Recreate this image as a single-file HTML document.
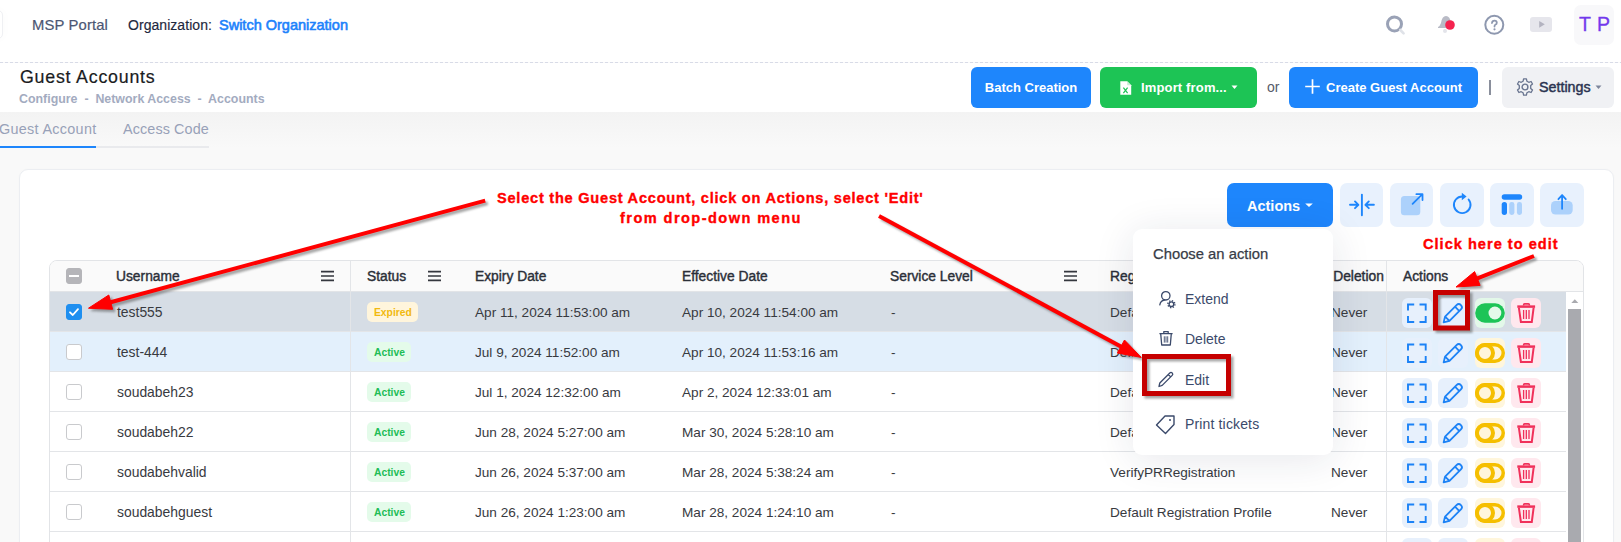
<!DOCTYPE html>
<html><head><meta charset="utf-8">
<style>
*{box-sizing:border-box;margin:0;padding:0}
html,body{width:1621px;height:542px;overflow:hidden;background:#f9f9f9;font-family:"Liberation Sans",sans-serif;position:relative}
.a{position:absolute;white-space:nowrap}
#top{position:absolute;left:0;top:0;width:1621px;height:62px;background:#fff}
#dash{position:absolute;left:0;top:62px;width:1621px;height:1px;background-image:linear-gradient(to right,#d8dbe7 60%,transparent 60%);background-size:5px 1px}
#ph{position:absolute;left:0;top:63px;width:1621px;height:49px;background:#fff}
.btn{position:absolute;top:67px;height:41px;border-radius:6px;color:#fff;font-weight:700;font-size:13px;line-height:41px}
#card{position:absolute;left:19px;top:169px;width:1595px;height:400px;background:#fff;border:1px solid #eceef2;border-radius:9px;box-shadow:0 0 3px rgba(0,0,0,.02)}
#tbl{position:absolute;left:49px;top:260px;width:1535px;height:300px;border:1px solid #e2e4e7;border-radius:8px;background:#fff;overflow:hidden}
.th{position:absolute;top:269px;font-size:13.8px;font-weight:400;color:#2b2f38;line-height:16px;-webkit-text-stroke:0.4px #2b2f38}
.row{position:absolute;left:50px;width:1516px;height:40px;border-bottom:1px solid #e3e5e8}
.td{position:absolute;font-size:13.6px;color:#383a3f;line-height:16px}
.cb{position:absolute;left:66px;width:16px;height:16px;border:1px solid #c9cacd;border-radius:3px;background:#fff}
.badge{position:absolute;left:367px;height:20px;border-radius:5px;font-size:10.3px;font-weight:700;line-height:20px;padding-left:7px}
.ib{position:absolute;width:30px;height:30px;border-radius:6px}
.tb{position:absolute;top:183px;width:43px;height:44px;border-radius:7px;background:#e8f1fd}
.hm{position:absolute;width:13px;height:10px;border-top:2px solid #3a3d44;border-bottom:2px solid #3a3d44}
.hm:after{content:"";position:absolute;left:0;top:2px;width:13px;height:2px;background:#3a3d44}
.dd{position:absolute;font-size:14px;color:#3b4a6b;line-height:16px}
.ann{position:absolute;color:#ff0000;font-weight:700;font-size:14px;white-space:nowrap;-webkit-text-stroke:0.35px #ff0000}
</style></head><body>
<div id="top"></div>
<div class="a" style="left:-8px;top:10px;width:11px;height:29px;border:1px solid #eff0f3;border-radius:5px;background:#fff;box-shadow:0 0 12px rgba(0,0,0,.025)"></div>
<div class="a" style="left:32px;top:17px;font-size:14.8px;color:#4b5673;line-height:17px;letter-spacing:0.15px;-webkit-text-stroke:0.2px #4b5673">MSP Portal</div>
<div class="a" style="left:128px;top:17px;font-size:14px;color:#1e2840;line-height:17px;letter-spacing:0.05px;-webkit-text-stroke:0.15px #1e2840">Organization:</div>
<div class="a" style="left:219px;top:17px;font-size:14.5px;font-weight:400;color:#1d82fb;line-height:17px;-webkit-text-stroke:0.6px #1d82fb">Switch Organization</div>
<!-- header icons -->
<svg class="a" style="left:1380px;top:10px" width="30" height="30" viewBox="0 0 30 30">
<circle cx="14.5" cy="14" r="7" fill="none" stroke="#9aa2b6" stroke-width="3"/>
<line x1="20.3" y1="20" x2="23.6" y2="23.3" stroke="#dfe2e8" stroke-width="2.6" stroke-linecap="round"/>
</svg>
<svg class="a" style="left:1432px;top:10px" width="30" height="30" viewBox="0 0 30 30">
<path d="M6 18 L6 17 Q8 16 9 13 Q10 6 14 6 Q18 6 19 13 L19 18 Z" fill="#b9bbc6"/>
<circle cx="13" cy="21" r="2" fill="#e3e4ea"/>
<circle cx="18" cy="15" r="4.8" fill="#f5234f"/>
</svg>
<svg class="a" style="left:1482px;top:12px" width="26" height="26" viewBox="0 0 26 26">
<circle cx="12.3" cy="12.8" r="9" fill="none" stroke="#8e98af" stroke-width="2"/>
<path d="M10 11 Q10.2 8.6 12.5 8.6 Q14.8 8.6 14.8 10.7 Q14.8 12 13.3 12.7 Q12.5 13.1 12.5 14.6" fill="none" stroke="#8e98af" stroke-width="1.8" stroke-linecap="round"/>
<circle cx="12.5" cy="17.3" r="1.1" fill="#8e98af"/>
</svg>
<div class="a" style="left:1530px;top:17px;width:22px;height:15px;border-radius:3px;background:#e6e6ec"></div>
<svg class="a" style="left:1538px;top:20px" width="9" height="9" viewBox="0 0 9 9"><path d="M1.2 0.9 L6.8 4.3 L1.2 7.7 Z" fill="#b3b3c0"/></svg>
<div class="a" style="left:1574px;top:5px;width:40px;height:40px;border-radius:7px;background:#f8f8fa"></div>
<div class="a" style="left:1579px;top:14px;font-size:19.5px;color:#7339ec;line-height:20px;letter-spacing:0.5px;-webkit-text-stroke:0.3px #7339ec">T P</div>
<div id="dash"></div>
<div id="ph"></div>
<div class="a" style="left:20px;top:67px;font-size:17.8px;color:#1a1c22;line-height:20px;letter-spacing:0.78px;-webkit-text-stroke:0.2px #1a1c22">Guest Accounts</div>
<div class="a" style="left:19px;top:92px;font-size:12.4px;font-weight:700;color:#a3abbf;line-height:14px">Configure &nbsp;-&nbsp; Network Access &nbsp;-&nbsp; Accounts</div>
<div class="btn" style="left:971px;width:120px;background:#1e86fc;text-align:center">Batch Creation</div>
<div class="btn" style="left:1100px;width:157px;background:#1dc455;padding-left:41px;letter-spacing:0.15px">Import from...</div>
<div class="btn" style="left:1289px;width:189px;background:#1e86fc;padding-left:37px">Create Guest Account</div>
<div class="a" style="left:1489px;top:80px;width:1.5px;height:15px;background:#8a8f9c"></div>
<div class="btn" style="left:1502px;width:112px;background:#f0f1f4;color:#2a3350;padding-left:37px;font-weight:400;font-size:14.3px;-webkit-text-stroke:0.45px #2a3350">Settings</div>
<div class="a" style="left:1267px;top:79px;font-size:14px;color:#555b68;line-height:16px">or</div>
<!-- button icons -->
<svg class="a" style="left:1120px;top:81px" width="12" height="14" viewBox="0 0 12 14">
<path d="M0.3 0.3 H7.2 L11.2 4.3 V13.8 H0.3 Z" fill="#fff"/>
<path d="M7.2 0.3 V4.3 H11.2 Z" fill="#c6efd3"/>
<path d="M3.4 6.6 L7.6 12.2 M7.6 6.6 L3.4 12.2" stroke="#1dc455" stroke-width="1.2"/>
</svg>
<svg class="a" style="left:1231px;top:85px" width="7" height="5" viewBox="0 0 7 5"><path d="M0.5 0.5 H6.5 L3.5 4 Z" fill="#fff"/></svg>
<svg class="a" style="left:1304px;top:78px" width="17" height="17" viewBox="0 0 17 17"><path d="M8.5 1.2 V15.8 M1.2 8.5 H15.8" stroke="#fff" stroke-width="1.7"/></svg>
<svg class="a" style="left:1515px;top:77px" width="20" height="20" viewBox="0 0 20 20">
<path d="M8.6 1.8 H11.4 L11.9 4.2 L13.8 5.3 L16.1 4.5 L17.5 7 L15.7 8.6 V11.4 L17.5 13 L16.1 15.5 L13.8 14.7 L11.9 15.8 L11.4 18.2 H8.6 L8.1 15.8 L6.2 14.7 L3.9 15.5 L2.5 13 L4.3 11.4 V8.6 L2.5 7 L3.9 4.5 L6.2 5.3 L8.1 4.2 Z" fill="none" stroke="#68748f" stroke-width="1.3" stroke-linejoin="round"/>
<circle cx="10" cy="10" r="2.9" fill="none" stroke="#68748f" stroke-width="1.4"/>
</svg>
<svg class="a" style="left:1595px;top:85px" width="7" height="5" viewBox="0 0 7 5"><path d="M0.5 0.5 H6.5 L3.5 4 Z" fill="#7d859b"/></svg>
<div class="a" style="left:0;top:112px;width:1621px;height:36px;background:linear-gradient(#f3f3f3,#f9f9f9)"></div>
<!-- tabs -->
<div class="a" style="left:-1px;top:121px;font-size:14.4px;color:#98a1b8;line-height:17px;letter-spacing:0.3px">Guest Account</div>
<div class="a" style="left:123px;top:121px;font-size:14.4px;color:#98a1b8;line-height:17px;letter-spacing:0.1px">Access Code</div>
<div class="a" style="left:0;top:146px;width:209px;height:2px;background:#e9eaed"></div>
<div class="a" style="left:0;top:146px;width:96px;height:2px;background:#1e86fc"></div>
<!-- card -->
<div id="card"></div>
<div id="tbl"></div>
<div class="a" style="left:50px;top:261px;width:1533px;height:31px;background:#fafafa;border-radius:7px 7px 0 0;border-bottom:1px solid #e2e4e7"></div>

<div class="a cb" style="top:268px;background:#b5b5b9;border-color:#b5b5b9"></div>
<div class="a" style="left:69px;top:275px;width:10px;height:2px;background:#fff"></div>
<div class="th a" style="left:116px">Username</div>
<div class="th a" style="left:367px">Status</div>
<div class="th a" style="left:475px">Expiry Date</div>
<div class="th a" style="left:682px">Effective Date</div>
<div class="th a" style="left:890px">Service Level</div>
<div class="th a" style="left:1110px">Registration Profile</div>
<div class="th a" style="left:1301px">Auto Deletion</div>
<div class="th a" style="left:1403px">Actions</div>
<svg class="a" style="left:321px;top:270px" width="13" height="12" viewBox="0 0 13 12"><path d="M0 1.6 H13 M0 6 H13 M0 10.4 H13" stroke="#34373e" stroke-width="1.6"/></svg>
<svg class="a" style="left:428px;top:270px" width="13" height="12" viewBox="0 0 13 12"><path d="M0 1.6 H13 M0 6 H13 M0 10.4 H13" stroke="#34373e" stroke-width="1.6"/></svg>
<svg class="a" style="left:1064px;top:270px" width="13" height="12" viewBox="0 0 13 12"><path d="M0 1.6 H13 M0 6 H13 M0 10.4 H13" stroke="#34373e" stroke-width="1.6"/></svg>
<div class="a" style="left:350px;top:261px;width:1px;height:281px;background:#e3e5e8"></div>
<div class="a" style="left:1386px;top:261px;width:1px;height:281px;background:#e3e5e8"></div>
<div class="row" style="top:292px;background:#d6dde5"></div>
<div class="row" style="top:332px;background:#e3f0fc"></div>
<div class="row" style="top:372px;background:#fff"></div>
<div class="row" style="top:412px;background:#fff"></div>
<div class="row" style="top:452px;background:#fff"></div>
<div class="row" style="top:492px;background:#fff"></div>
<div class="row" style="top:532px;background:#fff"></div>
<div class="a" style="left:350px;top:291px;width:1px;height:251px;background:#e3e5e8"></div>
<div class="a" style="left:1386px;top:291px;width:1px;height:251px;background:#e3e5e8"></div>
<div class="cb" style="top:304px;background:#1f8ff0;border-color:#1f8ff0"></div>
<svg class="a" style="left:66px;top:304px" width="16" height="16" viewBox="0 0 16 16"><path d="M4 8.3 L6.8 11 L12 5.2" fill="none" stroke="#fff" stroke-width="1.8" stroke-linecap="round" stroke-linejoin="round"/></svg>
<div class="td a" style="left:117px;top:304px;font-size:13.9px;line-height:17px">test555</div>
<div class="badge a" style="top:302px;width:51px;background:#fff5dc;color:#f1b90f;padding-top:1px">Expired</div>
<div class="td a" style="left:475px;top:305px">Apr 11, 2024 11:53:00 am</div>
<div class="td a" style="left:682px;top:305px">Apr 10, 2024 11:54:00 am</div>
<div class="td a" style="left:891px;top:305px">-</div>
<div class="td a" style="left:1110px;top:305px">Default Registration Profile</div>
<div class="td a" style="left:1331px;top:305px">Never</div>
<div class="ib a" style="left:1402px;top:298px;background:#e7f0fc"></div>
<svg class="a" style="left:1402px;top:298px" width="30" height="30" viewBox="0 0 30 30"><path d="M6 12.6 V6.5 H12.2 M17.5 6.5 H23.7 V12.6 M23.7 17.9 V24 H17.5 M12.2 24 H6 V17.9" fill="none" stroke="#1c82f6" stroke-width="1.9"/></svg>
<div class="ib a" style="left:1438px;top:298px;background:#e7f0fc"></div>
<svg class="a" style="left:1438px;top:298px" width="30" height="30" viewBox="0 0 30 30"><g transform="translate(5.6 24.4) rotate(-45)"><path d="M0 0 L5.2 -3.1 H21.4 A3.1 3.1 0 0 1 21.4 3.1 H5.2 Z M5.2 -3.1 V3.1 M19.2 -3.1 V3.1" fill="none" stroke="#1c82f6" stroke-width="1.8" stroke-linejoin="round"/></g></svg>
<div class="ib a" style="left:1475px;top:298px;background:#e3f8e9"></div>
<svg class="a" style="left:1475px;top:298px" width="30" height="30" viewBox="0 0 30 30"><rect x="0.2" y="5.3" width="29.6" height="19.4" rx="9.7" fill="#1dc457"/><circle cx="19.9" cy="15" r="6.4" fill="#e4f9ea"/></svg>
<div class="ib a" style="left:1511px;top:298px;background:#ffe8ee"></div>
<svg class="a" style="left:1511px;top:298px" width="30" height="30" viewBox="0 0 30 30"><g fill="none" stroke="#f0305a"><path d="M6.3 8.6 H24.1" stroke-width="2.5"/><path d="M12.6 7.6 V6.9 Q12.6 5.9 13.6 5.9 H17.4 Q18.4 5.9 18.4 6.9 V7.6" stroke-width="1.6"/><path d="M7.9 9.9 L9.9 24 H20.8 L22.6 9.9" stroke-width="2"/><path d="M12.6 12.1 V20.9 M15.3 12.1 V20.9 M18 12.1 V20.9" stroke-width="1.3"/></g></svg>
<div class="cb" style="top:344px"></div>
<div class="td a" style="left:117px;top:344px;font-size:13.9px;line-height:17px">test-444</div>
<div class="badge a" style="top:342px;width:44px;background:#e4fbea;color:#1dbd57;padding-top:1px">Active</div>
<div class="td a" style="left:475px;top:345px">Jul 9, 2024 11:52:00 am</div>
<div class="td a" style="left:682px;top:345px">Apr 10, 2024 11:53:16 am</div>
<div class="td a" style="left:891px;top:345px">-</div>
<div class="td a" style="left:1110px;top:345px">Default Registration Profile</div>
<div class="td a" style="left:1331px;top:345px">Never</div>
<div class="ib a" style="left:1402px;top:338px;background:#e7f0fc"></div>
<svg class="a" style="left:1402px;top:338px" width="30" height="30" viewBox="0 0 30 30"><path d="M6 12.6 V6.5 H12.2 M17.5 6.5 H23.7 V12.6 M23.7 17.9 V24 H17.5 M12.2 24 H6 V17.9" fill="none" stroke="#1c82f6" stroke-width="1.9"/></svg>
<div class="ib a" style="left:1438px;top:338px;background:#e7f0fc"></div>
<svg class="a" style="left:1438px;top:338px" width="30" height="30" viewBox="0 0 30 30"><g transform="translate(5.6 24.4) rotate(-45)"><path d="M0 0 L5.2 -3.1 H21.4 A3.1 3.1 0 0 1 21.4 3.1 H5.2 Z M5.2 -3.1 V3.1 M19.2 -3.1 V3.1" fill="none" stroke="#1c82f6" stroke-width="1.8" stroke-linejoin="round"/></g></svg>
<div class="ib a" style="left:1475px;top:338px;background:#fff6dc"></div>
<svg class="a" style="left:1475px;top:338px" width="30" height="30" viewBox="0 0 30 30"><rect x="1.75" y="6.75" width="26.5" height="16.5" rx="8.25" fill="none" stroke="#f5bf00" stroke-width="3.5"/><circle cx="10" cy="15" r="8" fill="none" stroke="#f5bf00" stroke-width="4"/></svg>
<div class="ib a" style="left:1511px;top:338px;background:#ffe8ee"></div>
<svg class="a" style="left:1511px;top:338px" width="30" height="30" viewBox="0 0 30 30"><g fill="none" stroke="#f0305a"><path d="M6.3 8.6 H24.1" stroke-width="2.5"/><path d="M12.6 7.6 V6.9 Q12.6 5.9 13.6 5.9 H17.4 Q18.4 5.9 18.4 6.9 V7.6" stroke-width="1.6"/><path d="M7.9 9.9 L9.9 24 H20.8 L22.6 9.9" stroke-width="2"/><path d="M12.6 12.1 V20.9 M15.3 12.1 V20.9 M18 12.1 V20.9" stroke-width="1.3"/></g></svg>
<div class="cb" style="top:384px"></div>
<div class="td a" style="left:117px;top:384px;font-size:13.9px;line-height:17px">soudabeh23</div>
<div class="badge a" style="top:382px;width:44px;background:#e4fbea;color:#1dbd57;padding-top:1px">Active</div>
<div class="td a" style="left:475px;top:385px">Jul 1, 2024 12:32:00 am</div>
<div class="td a" style="left:682px;top:385px">Apr 2, 2024 12:33:01 am</div>
<div class="td a" style="left:891px;top:385px">-</div>
<div class="td a" style="left:1110px;top:385px">Default Registration Profile</div>
<div class="td a" style="left:1331px;top:385px">Never</div>
<div class="ib a" style="left:1402px;top:378px;background:#e7f0fc"></div>
<svg class="a" style="left:1402px;top:378px" width="30" height="30" viewBox="0 0 30 30"><path d="M6 12.6 V6.5 H12.2 M17.5 6.5 H23.7 V12.6 M23.7 17.9 V24 H17.5 M12.2 24 H6 V17.9" fill="none" stroke="#1c82f6" stroke-width="1.9"/></svg>
<div class="ib a" style="left:1438px;top:378px;background:#e7f0fc"></div>
<svg class="a" style="left:1438px;top:378px" width="30" height="30" viewBox="0 0 30 30"><g transform="translate(5.6 24.4) rotate(-45)"><path d="M0 0 L5.2 -3.1 H21.4 A3.1 3.1 0 0 1 21.4 3.1 H5.2 Z M5.2 -3.1 V3.1 M19.2 -3.1 V3.1" fill="none" stroke="#1c82f6" stroke-width="1.8" stroke-linejoin="round"/></g></svg>
<div class="ib a" style="left:1475px;top:378px;background:#fff6dc"></div>
<svg class="a" style="left:1475px;top:378px" width="30" height="30" viewBox="0 0 30 30"><rect x="1.75" y="6.75" width="26.5" height="16.5" rx="8.25" fill="none" stroke="#f5bf00" stroke-width="3.5"/><circle cx="10" cy="15" r="8" fill="none" stroke="#f5bf00" stroke-width="4"/></svg>
<div class="ib a" style="left:1511px;top:378px;background:#ffe8ee"></div>
<svg class="a" style="left:1511px;top:378px" width="30" height="30" viewBox="0 0 30 30"><g fill="none" stroke="#f0305a"><path d="M6.3 8.6 H24.1" stroke-width="2.5"/><path d="M12.6 7.6 V6.9 Q12.6 5.9 13.6 5.9 H17.4 Q18.4 5.9 18.4 6.9 V7.6" stroke-width="1.6"/><path d="M7.9 9.9 L9.9 24 H20.8 L22.6 9.9" stroke-width="2"/><path d="M12.6 12.1 V20.9 M15.3 12.1 V20.9 M18 12.1 V20.9" stroke-width="1.3"/></g></svg>
<div class="cb" style="top:424px"></div>
<div class="td a" style="left:117px;top:424px;font-size:13.9px;line-height:17px">soudabeh22</div>
<div class="badge a" style="top:422px;width:44px;background:#e4fbea;color:#1dbd57;padding-top:1px">Active</div>
<div class="td a" style="left:475px;top:425px">Jun 28, 2024 5:27:00 am</div>
<div class="td a" style="left:682px;top:425px">Mar 30, 2024 5:28:10 am</div>
<div class="td a" style="left:891px;top:425px">-</div>
<div class="td a" style="left:1110px;top:425px">Default Registration Profile</div>
<div class="td a" style="left:1331px;top:425px">Never</div>
<div class="ib a" style="left:1402px;top:418px;background:#e7f0fc"></div>
<svg class="a" style="left:1402px;top:418px" width="30" height="30" viewBox="0 0 30 30"><path d="M6 12.6 V6.5 H12.2 M17.5 6.5 H23.7 V12.6 M23.7 17.9 V24 H17.5 M12.2 24 H6 V17.9" fill="none" stroke="#1c82f6" stroke-width="1.9"/></svg>
<div class="ib a" style="left:1438px;top:418px;background:#e7f0fc"></div>
<svg class="a" style="left:1438px;top:418px" width="30" height="30" viewBox="0 0 30 30"><g transform="translate(5.6 24.4) rotate(-45)"><path d="M0 0 L5.2 -3.1 H21.4 A3.1 3.1 0 0 1 21.4 3.1 H5.2 Z M5.2 -3.1 V3.1 M19.2 -3.1 V3.1" fill="none" stroke="#1c82f6" stroke-width="1.8" stroke-linejoin="round"/></g></svg>
<div class="ib a" style="left:1475px;top:418px;background:#fff6dc"></div>
<svg class="a" style="left:1475px;top:418px" width="30" height="30" viewBox="0 0 30 30"><rect x="1.75" y="6.75" width="26.5" height="16.5" rx="8.25" fill="none" stroke="#f5bf00" stroke-width="3.5"/><circle cx="10" cy="15" r="8" fill="none" stroke="#f5bf00" stroke-width="4"/></svg>
<div class="ib a" style="left:1511px;top:418px;background:#ffe8ee"></div>
<svg class="a" style="left:1511px;top:418px" width="30" height="30" viewBox="0 0 30 30"><g fill="none" stroke="#f0305a"><path d="M6.3 8.6 H24.1" stroke-width="2.5"/><path d="M12.6 7.6 V6.9 Q12.6 5.9 13.6 5.9 H17.4 Q18.4 5.9 18.4 6.9 V7.6" stroke-width="1.6"/><path d="M7.9 9.9 L9.9 24 H20.8 L22.6 9.9" stroke-width="2"/><path d="M12.6 12.1 V20.9 M15.3 12.1 V20.9 M18 12.1 V20.9" stroke-width="1.3"/></g></svg>
<div class="cb" style="top:464px"></div>
<div class="td a" style="left:117px;top:464px;font-size:13.9px;line-height:17px">soudabehvalid</div>
<div class="badge a" style="top:462px;width:44px;background:#e4fbea;color:#1dbd57;padding-top:1px">Active</div>
<div class="td a" style="left:475px;top:465px">Jun 26, 2024 5:37:00 am</div>
<div class="td a" style="left:682px;top:465px">Mar 28, 2024 5:38:24 am</div>
<div class="td a" style="left:891px;top:465px">-</div>
<div class="td a" style="left:1110px;top:465px">VerifyPRRegistration</div>
<div class="td a" style="left:1331px;top:465px">Never</div>
<div class="ib a" style="left:1402px;top:458px;background:#e7f0fc"></div>
<svg class="a" style="left:1402px;top:458px" width="30" height="30" viewBox="0 0 30 30"><path d="M6 12.6 V6.5 H12.2 M17.5 6.5 H23.7 V12.6 M23.7 17.9 V24 H17.5 M12.2 24 H6 V17.9" fill="none" stroke="#1c82f6" stroke-width="1.9"/></svg>
<div class="ib a" style="left:1438px;top:458px;background:#e7f0fc"></div>
<svg class="a" style="left:1438px;top:458px" width="30" height="30" viewBox="0 0 30 30"><g transform="translate(5.6 24.4) rotate(-45)"><path d="M0 0 L5.2 -3.1 H21.4 A3.1 3.1 0 0 1 21.4 3.1 H5.2 Z M5.2 -3.1 V3.1 M19.2 -3.1 V3.1" fill="none" stroke="#1c82f6" stroke-width="1.8" stroke-linejoin="round"/></g></svg>
<div class="ib a" style="left:1475px;top:458px;background:#fff6dc"></div>
<svg class="a" style="left:1475px;top:458px" width="30" height="30" viewBox="0 0 30 30"><rect x="1.75" y="6.75" width="26.5" height="16.5" rx="8.25" fill="none" stroke="#f5bf00" stroke-width="3.5"/><circle cx="10" cy="15" r="8" fill="none" stroke="#f5bf00" stroke-width="4"/></svg>
<div class="ib a" style="left:1511px;top:458px;background:#ffe8ee"></div>
<svg class="a" style="left:1511px;top:458px" width="30" height="30" viewBox="0 0 30 30"><g fill="none" stroke="#f0305a"><path d="M6.3 8.6 H24.1" stroke-width="2.5"/><path d="M12.6 7.6 V6.9 Q12.6 5.9 13.6 5.9 H17.4 Q18.4 5.9 18.4 6.9 V7.6" stroke-width="1.6"/><path d="M7.9 9.9 L9.9 24 H20.8 L22.6 9.9" stroke-width="2"/><path d="M12.6 12.1 V20.9 M15.3 12.1 V20.9 M18 12.1 V20.9" stroke-width="1.3"/></g></svg>
<div class="cb" style="top:504px"></div>
<div class="td a" style="left:117px;top:504px;font-size:13.9px;line-height:17px">soudabehguest</div>
<div class="badge a" style="top:502px;width:44px;background:#e4fbea;color:#1dbd57;padding-top:1px">Active</div>
<div class="td a" style="left:475px;top:505px">Jun 26, 2024 1:23:00 am</div>
<div class="td a" style="left:682px;top:505px">Mar 28, 2024 1:24:10 am</div>
<div class="td a" style="left:891px;top:505px">-</div>
<div class="td a" style="left:1110px;top:505px">Default Registration Profile</div>
<div class="td a" style="left:1331px;top:505px">Never</div>
<div class="ib a" style="left:1402px;top:498px;background:#e7f0fc"></div>
<svg class="a" style="left:1402px;top:498px" width="30" height="30" viewBox="0 0 30 30"><path d="M6 12.6 V6.5 H12.2 M17.5 6.5 H23.7 V12.6 M23.7 17.9 V24 H17.5 M12.2 24 H6 V17.9" fill="none" stroke="#1c82f6" stroke-width="1.9"/></svg>
<div class="ib a" style="left:1438px;top:498px;background:#e7f0fc"></div>
<svg class="a" style="left:1438px;top:498px" width="30" height="30" viewBox="0 0 30 30"><g transform="translate(5.6 24.4) rotate(-45)"><path d="M0 0 L5.2 -3.1 H21.4 A3.1 3.1 0 0 1 21.4 3.1 H5.2 Z M5.2 -3.1 V3.1 M19.2 -3.1 V3.1" fill="none" stroke="#1c82f6" stroke-width="1.8" stroke-linejoin="round"/></g></svg>
<div class="ib a" style="left:1475px;top:498px;background:#fff6dc"></div>
<svg class="a" style="left:1475px;top:498px" width="30" height="30" viewBox="0 0 30 30"><rect x="1.75" y="6.75" width="26.5" height="16.5" rx="8.25" fill="none" stroke="#f5bf00" stroke-width="3.5"/><circle cx="10" cy="15" r="8" fill="none" stroke="#f5bf00" stroke-width="4"/></svg>
<div class="ib a" style="left:1511px;top:498px;background:#ffe8ee"></div>
<svg class="a" style="left:1511px;top:498px" width="30" height="30" viewBox="0 0 30 30"><g fill="none" stroke="#f0305a"><path d="M6.3 8.6 H24.1" stroke-width="2.5"/><path d="M12.6 7.6 V6.9 Q12.6 5.9 13.6 5.9 H17.4 Q18.4 5.9 18.4 6.9 V7.6" stroke-width="1.6"/><path d="M7.9 9.9 L9.9 24 H20.8 L22.6 9.9" stroke-width="2"/><path d="M12.6 12.1 V20.9 M15.3 12.1 V20.9 M18 12.1 V20.9" stroke-width="1.3"/></g></svg>
<div class="cb" style="top:544px"></div>
<div class="td a" style="left:117px;top:544px;font-size:13.9px;line-height:17px">soudabeh</div>
<div class="badge a" style="top:542px;width:44px;background:#e4fbea;color:#1dbd57;padding-top:1px">Active</div>
<div class="td a" style="left:475px;top:545px">Jun 26, 2024 1:23:00 am</div>
<div class="td a" style="left:682px;top:545px">Mar 28, 2024 1:24:10 am</div>
<div class="td a" style="left:891px;top:545px">-</div>
<div class="td a" style="left:1110px;top:545px">Default Registration Profile</div>
<div class="td a" style="left:1331px;top:545px">Never</div>
<div class="ib a" style="left:1402px;top:538px;background:#e7f0fc"></div>
<svg class="a" style="left:1402px;top:538px" width="30" height="30" viewBox="0 0 30 30"><path d="M6 12.6 V6.5 H12.2 M17.5 6.5 H23.7 V12.6 M23.7 17.9 V24 H17.5 M12.2 24 H6 V17.9" fill="none" stroke="#1c82f6" stroke-width="1.9"/></svg>
<div class="ib a" style="left:1438px;top:538px;background:#e7f0fc"></div>
<svg class="a" style="left:1438px;top:538px" width="30" height="30" viewBox="0 0 30 30"><g transform="translate(5.6 24.4) rotate(-45)"><path d="M0 0 L5.2 -3.1 H21.4 A3.1 3.1 0 0 1 21.4 3.1 H5.2 Z M5.2 -3.1 V3.1 M19.2 -3.1 V3.1" fill="none" stroke="#1c82f6" stroke-width="1.8" stroke-linejoin="round"/></g></svg>
<div class="ib a" style="left:1475px;top:538px;background:#fff6dc"></div>
<svg class="a" style="left:1475px;top:538px" width="30" height="30" viewBox="0 0 30 30"><rect x="1.75" y="6.75" width="26.5" height="16.5" rx="8.25" fill="none" stroke="#f5bf00" stroke-width="3.5"/><circle cx="10" cy="15" r="8" fill="none" stroke="#f5bf00" stroke-width="4"/></svg>
<div class="ib a" style="left:1511px;top:538px;background:#ffe8ee"></div>
<svg class="a" style="left:1511px;top:538px" width="30" height="30" viewBox="0 0 30 30"><g fill="none" stroke="#f0305a"><path d="M6.3 8.6 H24.1" stroke-width="2.5"/><path d="M12.6 7.6 V6.9 Q12.6 5.9 13.6 5.9 H17.4 Q18.4 5.9 18.4 6.9 V7.6" stroke-width="1.6"/><path d="M7.9 9.9 L9.9 24 H20.8 L22.6 9.9" stroke-width="2"/><path d="M12.6 12.1 V20.9 M15.3 12.1 V20.9 M18 12.1 V20.9" stroke-width="1.3"/></g></svg>
<div class="a" style="left:1566px;top:292px;width:17px;height:250px;background:#fff"></div>
<div class="a" style="left:1568px;top:309px;width:13px;height:233px;background:#a9aaaf"></div>
<svg class="a" style="left:1570px;top:298px" width="10" height="6" viewBox="0 0 10 6"><path d="M1.3 5 L4.8 1.2 L8.3 5 Z" fill="#a9aaaf"/></svg>
<!-- toolbar -->
<div class="a" style="left:1227px;top:183px;width:106px;height:44px;border-radius:7px;background:#1e86fc"></div>
<div class="a" style="left:1247px;top:198px;font-size:14.5px;font-weight:700;color:#fff;line-height:16px">Actions</div>
<svg class="a" style="left:1305px;top:203px" width="8" height="5" viewBox="0 0 8 5"><path d="M0.2 0.4 H7.8 L4 3.9 Z" fill="#fff"/></svg>
<div class="tb" style="left:1340px"></div>
<svg class="a" style="left:1340px;top:183px" width="43" height="44" viewBox="0 0 43 44">
<path d="M21.9 11.6 V32.2 M10 21.8 H18 M15 18.4 L18.4 21.8 L15 25.2 M33.9 21.8 H25.8 M28.8 18.4 L25.4 21.8 L28.8 25.2" fill="none" stroke="#1e86fc" stroke-width="1.9" stroke-linecap="round" stroke-linejoin="round"/>
</svg>
<div class="tb" style="left:1390px"></div>
<svg class="a" style="left:1390px;top:183px" width="43" height="44" viewBox="0 0 43 44">
<rect x="10.9" y="12.9" width="19.4" height="19.3" rx="3.5" fill="#acd1fb"/>
<path d="M22.6 20.9 L32.4 11.2 M26.4 11.2 H32.5 V17" fill="none" stroke="#1e86fc" stroke-width="1.8" stroke-linecap="round" stroke-linejoin="round"/>
</svg>
<div class="tb" style="left:1440px;width:44px"></div>
<svg class="a" style="left:1440px;top:183px" width="44" height="44" viewBox="0 0 44 44">
<path d="M28.6 16.5 A8.3 8.3 0 1 1 22.4 13.5" fill="none" stroke="#1e86fc" stroke-width="1.9" stroke-linecap="round"/>
<path d="M21.8 9.8 L26.6 13.6 L21.8 17.2 Z" fill="#1e86fc"/>
</svg>
<div class="tb" style="left:1490px;width:44px"></div>
<svg class="a" style="left:1490px;top:183px" width="44" height="44" viewBox="0 0 44 44">
<rect x="11.7" y="11.3" width="20.5" height="5.5" rx="2.7" fill="#1e86fc"/>
<rect x="11.7" y="19" width="5.3" height="12.9" rx="2.6" fill="#1e86fc"/>
<rect x="19.2" y="19" width="5.2" height="12.9" rx="2.4" fill="#acd1fb"/>
<rect x="26.9" y="19" width="5.1" height="12.9" rx="2.4" fill="#acd1fb"/>
</svg>
<div class="tb" style="left:1540px;width:44px"></div>
<svg class="a" style="left:1540px;top:183px" width="44" height="44" viewBox="0 0 44 44">
<rect x="11" y="18" width="21.7" height="13.6" rx="4.5" fill="#acd1fb"/>
<path d="M22.1 25.8 V12.2 M18.4 16.2 L22.1 12.2 L25.8 16.2" fill="none" stroke="#1e86fc" stroke-width="1.8" stroke-linecap="round" stroke-linejoin="round"/>
</svg>
<!-- dropdown -->
<div class="a" style="left:1133px;top:229px;width:200px;height:226px;border-radius:9px;background:#fff;box-shadow:0 4px 40px rgba(30,40,70,.11)"></div>
<div class="a" style="left:1153px;top:246px;font-size:14.8px;color:#383c47;line-height:17px;-webkit-text-stroke:0.25px #383c47">Choose an action</div>
<svg class="a" style="left:1156px;top:289px" width="24" height="21" viewBox="0 0 24 21">
<circle cx="9.8" cy="6.8" r="4.2" fill="none" stroke="#3b4a6b" stroke-width="1.3"/>
<path d="M3.8 15.8 Q4.6 11.6 8.6 11" fill="none" stroke="#3b4a6b" stroke-width="1.3" stroke-linecap="round"/>
<circle cx="15.4" cy="15.2" r="2.3" fill="none" stroke="#3b4a6b" stroke-width="1.3"/>
<circle cx="15.4" cy="15.2" r="3.5" fill="none" stroke="#3b4a6b" stroke-width="1.4" stroke-dasharray="1.3 1.45"/>
</svg>
<div class="dd a" style="left:1185px;top:291px">Extend</div>
<svg class="a" style="left:1156px;top:329px" width="20" height="20" viewBox="0 0 20 20">
<path d="M3.4 4.6 H16.6 M7.8 4.6 V2.6 H12.2 V4.6 M4.7 4.6 L5.7 16 H14.3 L15.3 4.6" fill="none" stroke="#3b4a6b" stroke-width="1.3" stroke-linejoin="round"/>
<path d="M8.3 7.3 V13.6 M10 7.3 V13.6 M11.7 7.3 V13.6" fill="none" stroke="#3b4a6b" stroke-width="0.9"/>
</svg>
<div class="dd a" style="left:1185px;top:331px">Delete</div>
<svg class="a" style="left:1156px;top:370px" width="20" height="20" viewBox="0 0 20 20">
<path d="M3 16.5 L3.8 13 L13.8 3 Q15 1.8 16.2 3 Q17.4 4.2 16.2 5.4 L6.2 15.4 Z M12.3 4.5 L14.7 6.9" fill="none" stroke="#3b4a6b" stroke-width="1.3" stroke-linejoin="round"/>
</svg>
<div class="dd a" style="left:1185px;top:372px">Edit</div>
<svg class="a" style="left:1154px;top:413px" width="24" height="24" viewBox="0 0 24 24">
<path d="M2.5 12 L11 3 H20 V11.5 L11.5 20.5 Z" fill="none" stroke="#3b4a6b" stroke-width="1.4" stroke-linejoin="round"/>
<circle cx="16" cy="7" r="1" fill="#3b4a6b"/>
</svg>
<div class="dd a" style="left:1185px;top:416px;letter-spacing:0.15px">Print tickets</div>
<!-- annotations -->
<div class="ann a" style="left:497px;top:190px;font-size:14.6px;letter-spacing:0.75px">Select the Guest Account, click on Actions, select 'Edit'</div>
<div class="ann a" style="left:620px;top:210px;font-size:14.6px;letter-spacing:1.42px">from drop-down menu</div>
<div class="ann a" style="left:1423px;top:236px;font-size:14.6px;letter-spacing:1.0px">Click here to edit</div>
<svg class="a" style="left:0;top:0" width="1621" height="542" viewBox="0 0 1621 542">
<defs><filter id="sh" x="-20%" y="-20%" width="140%" height="140%"><feGaussianBlur stdDeviation="1.3"/></filter></defs>
<g opacity="0.5" transform="translate(2.5,2.5)" filter="url(#sh)" stroke="#505050" fill="#505050">
<line x1="485.2" y1="200.6" x2="108.8" y2="302.7" stroke-width="4"/>
<path d="M88.5 308.2 L108.8 295.0 L112.6 309.3 Z"/>
<line x1="879" y1="216" x2="1122.7" y2="347.4" stroke-width="4"/>
<path d="M1141.2 357.4 L1117.4 353.0 L1124.5 340.0 Z"/>
<line x1="1534" y1="256" x2="1475.5" y2="279.2" stroke-width="4"/>
<path d="M1456 287 L1474.6 271.6 L1480.1 285.4 Z"/>
<g fill="none"><rect x="1144.5" y="356.5" width="84" height="37" stroke-width="5"/><rect x="1435.5" y="292.5" width="32" height="35.5" stroke-width="5"/></g></g>
<g stroke="#ff0000" fill="#ff0000">
<line x1="485.2" y1="200.6" x2="108.8" y2="302.7" stroke-width="4"/>
<path d="M88.5 308.2 L108.8 295.0 L112.6 309.3 Z"/>
<line x1="879" y1="216" x2="1122.7" y2="347.4" stroke-width="4"/>
<path d="M1141.2 357.4 L1117.4 353.0 L1124.5 340.0 Z"/>
<line x1="1534" y1="256" x2="1475.5" y2="279.2" stroke-width="4"/>
<path d="M1456 287 L1474.6 271.6 L1480.1 285.4 Z"/>
</g><g fill="none" stroke="#c60000"><rect x="1144.5" y="356.5" width="84" height="37" stroke-width="5"/><rect x="1435.5" y="292.5" width="32" height="35.5" stroke-width="5"/></g></svg>
</body></html>
